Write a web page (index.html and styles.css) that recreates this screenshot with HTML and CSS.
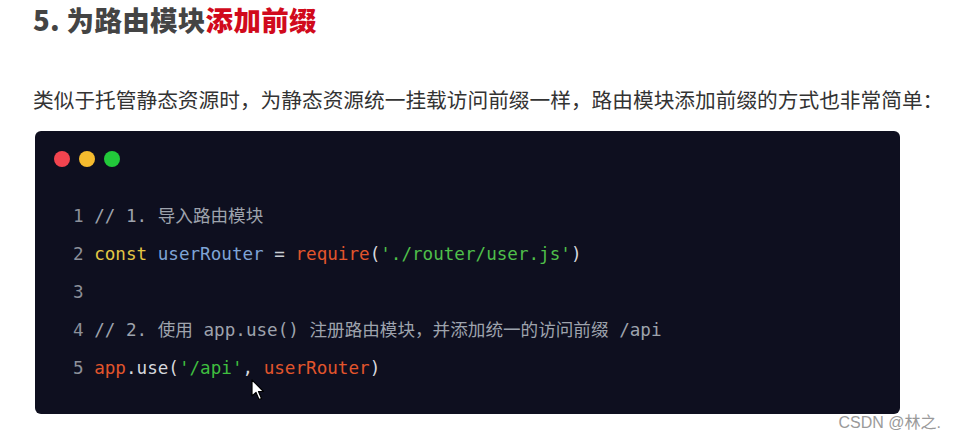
FILE: index.html
```html
<!DOCTYPE html>
<html lang="zh">
<head>
<meta charset="utf-8">
<title>为路由模块添加前缀</title>
<link rel="stylesheet" href="styles.css">
</head>
<body>
<div class="page">
  <h2 class="title">5. 为路由模块<span class="hl">添加前缀</span></h2>
  <p class="desc">类似于托管静态资源时，为静态资源统一挂载访问前缀一样，路由模块添加前缀的方式也非常简单：</p>
  <div class="code">
    <div class="dots">
      <span class="dot red"></span><span class="dot yellow"></span><span class="dot green"></span>
    </div>
    <div class="lines">
      <div class="line"><span class="ln">1</span> <span class="cm">// 1. 导入路由模块</span></div>
      <div class="line"><span class="ln">2</span> <span class="kw">const</span> <span class="var">userRouter</span> <span class="op">=</span> <span class="fn">require</span><span class="pn">(</span><span class="str">'./router/user.js'</span><span class="pn">)</span></div>
      <div class="line"><span class="ln">3</span></div>
      <div class="line"><span class="ln">4</span> <span class="cm">// 2. 使用 app.use() 注册路由模块，并添加统一的访问前缀 /api</span></div>
      <div class="line"><span class="ln">5</span> <span class="fn">app</span><span class="pn">.use(</span><span class="str2">'/api'</span><span class="pn">, </span><span class="fn">userRouter</span><span class="pn">)</span></div>
    </div>
    <svg class="cursor" width="14" height="22" viewBox="0 0 14 22"><path d="M1 1 L1 17 L5 13.5 L8 20.5 L10.5 19.5 L7.5 12.5 L12.5 12.5 Z" fill="#fff" stroke="#000" stroke-width="1.2" stroke-linejoin="round"/></svg>
  </div>
  <div class="mark">CSDN @林之.</div>
</div>
</body>
</html>
```
FILE: styles.css
```css
html, body {
  margin: 0;
  padding: 0;
  background: #fff;
}
.page {
  position: relative;
  width: 954px;
  height: 441px;
  overflow: hidden;
}
.title {
  margin: 0;
  padding: 4px 0 0 33px;
  height: 46px;
  box-sizing: border-box;
  font-family: "Noto Sans CJK SC", "Noto Sans", sans-serif;
  font-weight: 900;
  font-size: 27.5px;
  line-height: 30px;
  color: #444;
  letter-spacing: 0.3px;
}
.title .hl {
  color: #d10a1c;
}
.desc {
  margin: 38px 0 0 33px;
  font-family: "Noto Sans CJK SC", sans-serif;
  font-size: 20.7px;
  line-height: 30px;
  color: #333;
  white-space: nowrap;
}
.code {
  position: relative;
  margin: 17px 0 0 35px;
  width: 865px;
  height: 283px;
  box-sizing: border-box;
  background: #0e0f1f;
  border-radius: 6px;
  padding: 20px 0 0 19px;
}
.dots {
  display: flex;
  gap: 9px;
  height: 16px;
}
.dot {
  width: 16px;
  height: 16px;
  border-radius: 50%;
}
.red { background: #f2444f; }
.yellow { background: #f5bb2e; }
.green { background: #22c93a; }
.lines {
  margin-top: 30px;
  padding-left: 19px;
  font-family: "DejaVu Sans Mono", "Noto Sans CJK SC", monospace;
  font-size: 17.6px;
  line-height: 38px;
  color: #d6d8de;
}
.line {
  height: 38px;
  white-space: pre;
}
.ln { color: #8c909a; }
.cm { color: #9ea3ad; }
.kw { color: #e3c744; }
.var { color: #7fa4d6; }
.op { color: #c9ccd3; }
.fn { color: #e2552c; }
.pn { color: #d6d8de; }
.str { color: #4fbf4a; }
.str2 { color: #3fbe3f; }
.cursor {
  position: absolute;
  left: 216px;
  top: 248px;
}
.mark {
  position: absolute;
  right: 13px;
  bottom: 8px;
  font-family: "Liberation Sans", "Noto Sans CJK SC", sans-serif;
  font-size: 16px;
  color: #9a9a9a;
}
```
